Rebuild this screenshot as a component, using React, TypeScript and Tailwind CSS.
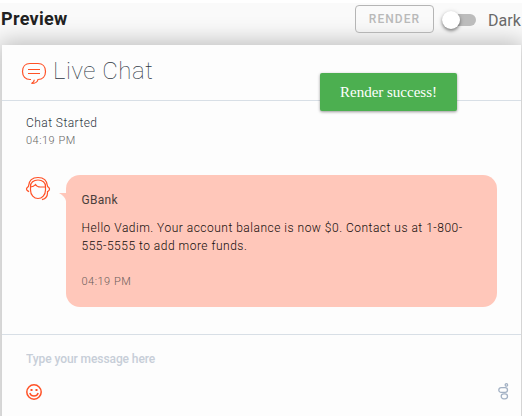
import { useState } from 'react'

const messages = [
  {
    author: 'GBank',
    text: 'Hello Vadim. Your account balance is now $0. Contact us at 1-800-555-5555 to add more funds.',
    time: '04:19 PM',
  },
]

function ChatIcon() {
  return (
    <svg width="26" height="24" viewBox="0 0 26 24" fill="none" stroke="#ff5126" strokeWidth="1.2">
      <path d="M10 18.500H9C4.500 18.500 1.500 15.500 1.500 10.500S4.500 2.500 9 2.500h8c4.500 0 7.500 3 7.500 8s-3 8-7.500 8c-.5 2.500-2.500 4-6.500 4 1.500-.8 2.800-2.100 2.800-3.800" />
      <path d="M7 8.500h12M7 12.500h12" />
    </svg>
  )
}

function AgentIcon() {
  return (
    <svg width="26" height="26" viewBox="0 0 26 26" fill="none" stroke="#ff5126" strokeWidth="1.2">
      <path d="M3.500 11C4 5.500 7.500 2.500 13 2.500s9 3 9.500 8.500" />
      <path d="M5.500 11.500V15c0 5 3.500 8.500 7.500 8.500s7.500-3.500 7.500-8.500v-3.500C20.500 7.500 17.500 5 13 5s-7.500 2.500-7.500 6.500z" />
      <path d="M5.500 12c2.300-.2 4-1.200 5-2.500 1 1.800 3 2.500 5 2.500h5" />
      <path d="M3.500 11C3.500 12.300 1.500 12.300 1.500 14s1.500 1.900 2.500 2.700M22.500 11c0 1.300 2 1.300 2 3s-1 1.900-2 2.700M22.500 16v2c0 3.500-2 5.700-5.500 6.700" />
    </svg>
  )
}

function SmileIcon() {
  return (
    <svg width="16" height="16" viewBox="0 0 16 16" fill="none" stroke="#ff5126" strokeWidth="1.500">
      <circle cx="8" cy="8" r="7.200" />
      <path d="M3.800 9c.7 2 2.200 3 4.200 3s3.500-1 4.200-3" />
      <path d="M4.500 6h2M9.500 6h2" strokeWidth="2" />
    </svg>
  )
}

function BrandIcon() {
  return (
    <svg width="11" height="17" viewBox="0 0 11 17" fill="none" stroke="#a3b1c4" strokeWidth="1.300">
      <rect x="0.800" y="4.600" width="8.700" height="4.700" rx="2.350" />
      <rect x="3.200" y="10.800" width="6.300" height="5" rx="2.500" />
      <circle cx="8.400" cy="1.900" r="1.200" />
    </svg>
  )
}

export default function App() {
  const [dark, setDark] = useState(false)

  return (
    <main className="relative h-[416px] w-[522px] overflow-hidden border-t-[3px] border-white bg-[#fafafa] font-['Roboto',sans-serif]">
      <header className="flex h-[42px] items-start">
        <h1 className="ml-[1px] mt-[1px] grow text-[18px] leading-[29px] font-bold tracking-[0.3px] text-[#212121]">Preview</h1>
        <button
          type="button"
          disabled
          className="mt-[2px] h-7 w-[79px] rounded border border-[#b5b5b5] text-[12px] leading-[26px] font-medium tracking-[1.07px] text-[#b9b9b9]"
        >
          RENDER
        </button>
        <button
          type="button"
          role="switch"
          aria-checked={dark}
          aria-label="Dark"
          onClick={() => setDark(!dark)}
          className="mt-2 ml-[8px] flex h-[18px] w-[34px] items-center"
        >
          <span className="flex h-3 w-[34px] items-center rounded-full bg-[#bcbcbc]">
            <span className="h-[18px] w-[18px] shrink-0 rounded-full bg-white shadow-[0_2px_3px_rgba(0,0,0,0.35),0_1px_5px_rgba(0,0,0,0.2)]" />
          </span>
        </button>
        <span className="mt-[3px] ml-[12px] w-[34px] text-[16px] leading-[29px] text-[#696969]">Dark</span>
      </header>

      <section className="ml-[2px] flex h-[400px] w-[519px] flex-col bg-[#fdfdfd] shadow-[0_0_22px_3px_rgba(0,0,0,0.25)]">
        <div className="flex h-[56px] items-center border-b border-[#d8dfe6] pl-[19px]">
          <ChatIcon />
          <h2 className="ml-[6px] -mt-[3px] text-[24px] leading-8 font-thin tracking-[0.55px] text-[#2c3643]">Live Chat</h2>
        </div>

        <div className="h-[234px] border-b border-[#d8dfe6] pl-6">
          <div className="pt-[13px] font-light">
            <p className="text-[12px] leading-[18px] tracking-[0.45px] text-[#2f3742]">Chat Started</p>
            <p className="text-[11px] leading-[17px] tracking-[0.5px] text-[#666666]">04:19 PM</p>
          </div>

          {messages.map((message) => (
            <div key={message.time} className="mt-[26px] flex">
              <div className="-ml-[1px] w-[26px]">
                <AgentIcon />
              </div>
              <svg className="mt-[18px] ml-[8px]" width="7" height="8" viewBox="0 0 7 8" fill="#ffc7ba">
                <path d="M0 0h7v8C6.500 5 4 2 0 0z" />
              </svg>
              <div className="h-[132px] w-[431px] rounded-[14px] bg-[#ffc7ba] pr-4 pt-4 pl-[15.5px] text-[12px] leading-[18px] font-light">
                <p className="font-normal tracking-[0.3px] text-[#4a3e3b]">{message.author}</p>
                <p className="mt-[10px] w-[390px] tracking-[0.500px] text-[#120c0a]">{message.text}</p>
                <p className="mt-[18px] text-[11px] tracking-[0.500px] text-[#6b5d5a]">{message.time}</p>
              </div>
            </div>
          ))}
        </div>

        <div className="pt-[15px] pr-[12px] pl-6">
          <input
            type="text"
            placeholder="Type your message here"
            className="block h-[18px] w-full bg-transparent p-0 text-[12px] leading-[18px] font-medium tracking-[-0.08px] outline-none placeholder:text-[#c7ced8]"
          />
          <div className="mt-[16px] flex h-[17px] items-start justify-between">
            <SmileIcon />
            <div className="-mt-px">
              <BrandIcon />
            </div>
          </div>
        </div>
      </section>

      <div
        role="status"
        className="absolute top-[70px] left-[320px] flex h-[38px] w-[137px] items-center justify-center rounded-[2px] bg-[#4caf50] font-['Liberation_Serif',serif] text-[15px] text-white shadow-[0_1px_3px_rgba(0,0,0,0.4)]"
      >
        Render success!
      </div>
    </main>
  )
}
